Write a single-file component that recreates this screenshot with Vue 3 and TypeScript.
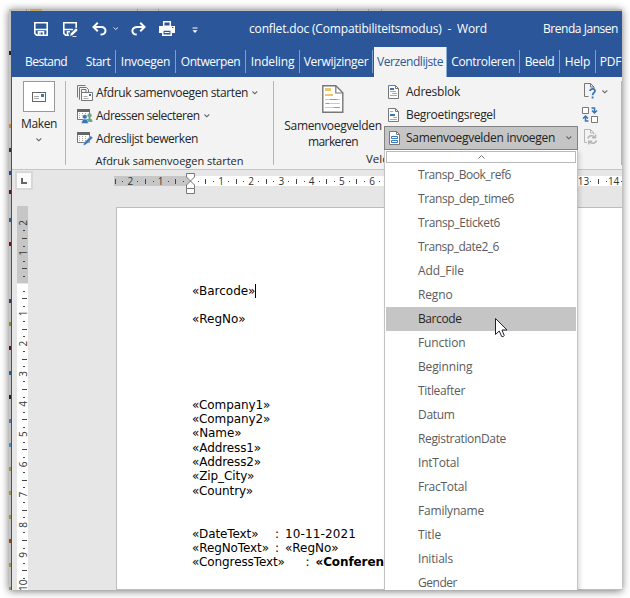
<script setup lang="ts">
interface Label { text: string; width: number }
interface Tab extends Label { cell: number; active?: boolean; plain?: boolean }

/* Spreads a label over the given width by adjusting its letter spacing. */
const vFit = {
  mounted(el: HTMLElement, binding: { value: number }) {
    const natural = el.getBoundingClientRect().width
    const count = (el.textContent ?? '').length
    el.style.letterSpacing = `${(binding.value - natural) / count}px`
  },
}

const tabs: Tab[] = [
  { text: 'Bestand', width: 42, cell: 69, plain: true },
  { text: 'Start', width: 24.5, cell: 35 },
  { text: 'Invoegen', width: 49.5, cell: 60 },
  { text: 'Ontwerpen', width: 59.5, cell: 70 },
  { text: 'Indeling', width: 43.5, cell: 54 },
  { text: 'Verwijzinger', width: 64.5, cell: 73 },
  { text: 'Verzendlijste', width: 66, cell: 74, active: true },
  { text: 'Controleren', width: 63.5, cell: 73 },
  { text: 'Beeld', width: 29.5, cell: 40 },
  { text: 'Help', width: 25.5, cell: 36 },
  { text: 'PDF', width: 21.5, cell: 30 },
]

const fields: Label[] = [
  { text: 'Transp_Book_ref6', width: 93 },
  { text: 'Transp_dep_time6', width: 96 },
  { text: 'Transp_Eticket6', width: 82 },
  { text: 'Transp_date2_6', width: 81 },
  { text: 'Add_File', width: 46 },
  { text: 'Regno', width: 34.5 },
  { text: 'Barcode', width: 43.5 },
  { text: 'Function', width: 47.5 },
  { text: 'Beginning', width: 54.5 },
  { text: 'Titleafter', width: 47 },
  { text: 'Datum', width: 36.5 },
  { text: 'RegistrationDate', width: 88 },
  { text: 'IntTotal', width: 41 },
  { text: 'FracTotal', width: 49 },
  { text: 'Familyname', width: 66 },
  { text: 'Title', width: 23 },
  { text: 'Initials', width: 35 },
  { text: 'Gender', width: 39 },
]
const selected = 'Barcode'

const step = 30.2
const hNumbers = [-2, -1, 1, 2, 3, 4, 5, 6, 13, 14]
const vNumbers = [-2, -1, 1, 2, 3, 4, 5, 6, 7, 8, 9, 10]
const quarters = Array.from({ length: 70 }, (_, i) => i - 10).filter((q) => q % 4 !== 0)
const hQuarters = quarters
const vQuarters = quarters.filter((q) => q < 40 && q > -8)

const address = ['Company1', 'Company2', 'Name', 'Address1', 'Address2', 'Zip_City', 'Country']

const debris = [
  { y: 51, c: '#222' }, { y: 124, c: '#c78a3c' }, { y: 148, c: '#333' }, { y: 171, c: '#274a78' },
  { y: 190, c: '#5a1030' }, { y: 218, c: '#345f92' }, { y: 242, c: '#6b1717' }, { y: 299, c: '#333a5c' },
  { y: 322, c: '#8a8a35' }, { y: 346, c: '#5a1030' }, { y: 371, c: '#285f92' }, { y: 395, c: '#222' },
  { y: 419, c: '#5577a0' }, { y: 443, c: '#4e8db4' }, { y: 467, c: '#a3934a' }, { y: 491, c: '#a3934a' },
  { y: 515, c: '#a3934a' }, { y: 539, c: '#8a4a20' }, { y: 563, c: '#a3934a' }, { y: 587, c: '#a3934a' },
]
</script>

<template>
  <div class="screen">
    <div class="shot">
      <svg class="behind" width="613" height="581" shape-rendering="crispEdges">
        <rect width="613" height="2" fill="#bdbdbd" />
        <rect width="2" height="581" fill="#c3c3c3" />
        <rect x="21" width="12" height="2" fill="#c5a75c" />
        <path d="M17 0v2M128 0v2M149 0v2M328 0v2M359 0v2M372 0v2" stroke="#999" />
        <rect v-for="d in debris" :key="d.y" x="0" :y="d.y - 9" width="2" height="4" :fill="d.c" />
      </svg>
      <div class="window">
        <header class="titlebar">
          <div class="quick">
            <svg width="14" height="14" viewBox="0 0 14 14" fill="none" stroke="#fff" stroke-width="1.6"><path d="M.8.8h12.4v12.4H2.6L.8 11.5zM1 7.5h12M4.5 13V9.8h5V13" /><path d="M6 10v3" stroke-width="1" /></svg>
            <svg class="save-as" width="16" height="16" viewBox="0 0 16 16" fill="none" stroke="#fff" stroke-width="1.6"><path d="M6 13.2H2.6L.8 11.5V.8h12.4V6M1 7.5h9M4.500 13V9.800H7" /><path d="m6.500 14.500 1-3.200 5.500-5.500 2.200 2.200-5.500 5.500z" fill="#fff" stroke="#2b579a" stroke-width=".8" /><path d="m11.200 7.600 2 2M9.500 14.500h4" stroke="#cfdced" stroke-width="1" /></svg>
            <svg class="undo" width="15" height="14" viewBox="0 0 15 14" fill="none" stroke="#fff" stroke-width="2"><path d="M5.800.8 1.500 5l4.300 4.200M2 5h7.200c6 0 5.700 7.600-.7 7.600" /></svg>
            <svg class="undo-menu" width="6" height="4" fill="none" stroke="#e3eaf5"><path d="m.5.5 2.200 2L5 .5" /></svg>
            <svg class="redo" width="15" height="14" viewBox="0 0 15 14" fill="none" stroke="#fff" stroke-width="2"><path d="M9.200.8 13.500 5 9.200 9.200M13 5H6.800C-.4 5-.1 12.600 5.700 12.600" /></svg>
            <svg class="print" width="16" height="15" viewBox="0 0 16 15"><path d="M0 5h16v7h-3V9H3v3H0z" fill="#fff" /><path d="M4.700.7h6.600v4.600H4.700zM3.800 9h8.400v5.200H3.800z" fill="#2b579a" stroke="#fff" stroke-width="1.500" /><path d="M5.500 11.500h5" stroke="#fff" /><path d="M13 6.500h1.400" stroke="#2b579a" /></svg>
            <svg class="more" width="6" height="7" fill="none"><path d="M.5 1h5" stroke="#fff" /><path d="M.5 3.300h5L3 6z" fill="#fff" /></svg>
          </div>
          <div class="doc-title"><span v-fit="238">conflet.doc (Compatibiliteitsmodus)&nbsp; -&nbsp; Word</span></div>
          <div class="user"><span v-fit="75">Brenda Jansen</span></div>
        </header>

        <nav class="tabs">
          <div v-for="t in tabs" :key="t.text" class="tab" :class="{ active: t.active, plain: t.plain }" :style="{ width: t.cell + 'px' }">
            <span v-fit="t.width">{{ t.text }}</span>
          </div>
        </nav>

        <section class="ribbon">
          <div class="group make">
            <div class="make-box">
              <svg width="14" height="10" fill="none" shape-rendering="crispEdges"><path d="M.5.5h13v9H.5z" stroke="#666" /><path d="M2 4.500h5M2 6.500h5" stroke="#aaa" /><path d="M9 2h3v3H9z" fill="#3976b5" /></svg>
            </div>
            <span v-fit="36" class="make-label">Maken</span>
            <svg class="chev" width="6" height="4"><path d="m.5.5 2.300 2.300L5.200.5" /></svg>
          </div>

          <div class="group start">
            <div class="command">
              <svg width="16" height="16" fill="none" stroke="#767676"><path d="M.5 12.500V.5h8M3 14.500h-.5v-12h7l2 2V7" /><path d="M4.500 8V4.500H9V7" /><path d="M4.500 7.500h11v8h-11z" fill="#fff" /><path d="M6.500 11.500h4M6.500 13.500h5" stroke="#aaa" /><path d="M12 9h2v2h-2z" fill="#3976b5" stroke="none" /></svg>
              <span v-fit="152">Afdruk samenvoegen starten</span>
              <svg class="chev" width="6" height="4"><path d="m.5.5 2.300 2.300L5.200.5" /></svg>
            </div>
            <div class="command">
              <svg width="16" height="16" fill="none"><path d="M.5 1.500h12v10H.5z" fill="#fff" stroke="#777" /><path d="M0 1h13v3H0z" fill="#666" /><path d="M2 5.500h9M2 7.500h9M2 9.500h9" stroke="#aaa" stroke-dasharray="1 2" /><circle cx="12.500" cy="7.500" r="2.200" fill="#6da58d" /><path d="M9.500 14c0-5 6-5 6 0z" fill="#6da58d" /><circle cx="7.800" cy="8.800" r="2.400" fill="#3976b5" stroke="#f3f3f3" stroke-width=".6" /><path d="M4.500 15.500c0-6 6.800-6 6.800 0z" fill="#3976b5" stroke="#f3f3f3" stroke-width=".5" /></svg>
              <span v-fit="103.5">Adressen selecteren</span>
              <svg class="chev" width="6" height="4"><path d="m.5.5 2.300 2.300L5.200.5" /></svg>
            </div>
            <div class="command">
              <svg width="16" height="16" fill="none"><path d="M.5 1.500h12v10H.5z" fill="#fff" stroke="#777" /><path d="M0 1h13v3H0z" fill="#666" /><path d="M2 5.500h9M2 7.500h9M2 9.500h9" stroke="#aaa" stroke-dasharray="1 2" /><path d="m6 14.800 1.100-3.300 6.800-6.800 2 2-6.800 6.900z" fill="#3976b5" stroke="#f3f3f3" stroke-width=".5" /></svg>
              <span v-fit="102">Adreslijst bewerken</span>
            </div>
            <div class="caption"><span v-fit="148">Afdruk samenvoegen starten</span></div>
          </div>

          <div class="group write">
            <div class="mark">
              <svg width="22" height="29" fill="none"><path d="M.8.8h13l7 7v19.400H.8z" fill="#fff" stroke="#777" stroke-width="1.400" /><path d="M13.800 1v7h7" stroke="#777" stroke-width="1.200" /><path d="M3 3h6v3H3zM3 9h8v2H3z" fill="#edc471" /><path d="M3 14.500h15M3 18.500h15M3 22.500h15" stroke="#e9c67f" /><path d="M8 14.500h7M4 18.500h3M12 22.500h6" stroke="#999" /></svg>
              <span v-fit="97.5" class="line-a">Samenvoegvelden</span>
              <span v-fit="50">markeren</span>
            </div>
            <div class="insert">
              <div class="command">
                <svg width="12" height="14" fill="none"><path d="M.5.5h7l3 3v10H.5z" fill="#fff" stroke="#777" /><path d="M7.500.5v3h3" stroke="#777" /><path d="M2 3h4v2H2z" fill="#3976b5" /><path d="M2 6.500h6M4 8.500h5M2 10.500h7" stroke="#aaa" /></svg>
                <span v-fit="54">Adresblok</span>
              </div>
              <div class="command">
                <svg width="12" height="14" fill="none"><path d="M.5.5h7l3 3v10H.5z" fill="#fff" stroke="#777" /><path d="M7.500.5v3h3" stroke="#777" /><path d="M2 6h5v2H2z" fill="#3976b5" /><path d="M2 3.500h3M5 9.500h4M2 11.500h7" stroke="#aaa" /></svg>
                <span v-fit="89.5">Begroetingsregel</span>
              </div>
              <div class="command pressed">
                <svg width="12" height="14" fill="none"><path d="M.5.5h7l3 3v10H.5z" fill="#fff" stroke="#777" /><path d="M7.500.5v3h3" stroke="#777" /><path d="M2.500 5.500h6v2h-6zM2.500 9.500h6v2h-6z" stroke="#3976b5" /></svg>
                <span v-fit="149">Samenvoegvelden invoegen</span>
                <svg class="chev" width="6" height="4"><path d="m.5.5 2.300 2.300L5.200.5" /></svg>
              </div>
            </div>
            <div class="tools">
              <div class="tool">
                <svg width="16" height="17" fill="none"><path d="M6.500 13.500h-4V.5h6l3.500 3.500v2" stroke="#777" /><path d="M8.500.5V4H12" stroke="#777" /><path d="M8 8c.2-3 5.500-2.500 5 .2-.3 1.800-2.400 1.500-2.400 4M10.600 13.500v2" stroke="#3976b5" stroke-width="1.800" /></svg>
                <svg class="chev" width="6" height="4"><path d="m.5.5 2.300 2.300L5.200.5" /></svg>
              </div>
              <div class="tool">
                <svg width="16" height="17" fill="none"><path d="M.5 1.500h6v6h-6zM9.500 10.500h6v6h-6z" fill="#fff" stroke="#777" /><path d="M9.500 2h3v4M10 4.500l2.500 2.500L15 4.500M6.500 15h-3v-4M1 12.500 3.500 10 6 12.500" stroke="#3976b5" stroke-width="1.500" /></svg>
              </div>
              <div class="tool">
                <svg width="16" height="17" fill="none" stroke="#b5b5b5"><path d="M5 13.500H2.500V.5h6L12 4v1M8.500.5V4H12" /><path d="M5.800 9.500c1-3.500 5.500-3.700 7-1M13.500 5.500v3.300H10M14.500 11.500c-1 3.500-5.500 3.700-7 1M6.800 15.500v-3.300h3.500" stroke-width="1.500" /></svg>
              </div>
            </div>
            <div class="caption write-caption">Velden</div>
          </div>
        </section>

        <main class="workspace">
          <div class="ruler-row">
            <div class="tab-stop"><svg width="6" height="6"><path d="M1 0v5h5" fill="none" stroke="#666" stroke-width="2" /></svg></div>
            <svg class="h-ruler" width="508" height="20">
              <rect y="2" width="76" height="10" fill="#c6c6c6" />
              <rect x="76" y="2" width="432" height="10" fill="#fff" />
              <g shape-rendering="crispEdges" fill="#444">
                <rect v-for="q in hQuarters" :key="q" :x="Math.round(76.3 + q * step / 4)" :y="q % 2 ? 7 : 5" width="1" :height="q % 2 ? 1 : 5" />
              </g>
              <text v-for="n in hNumbers" :key="n" :x="76.8 + n * step" y="11" text-anchor="middle">{{ Math.abs(n) }}</text>
              <g fill="#fff" stroke="#777"><path d="M72.500-.5h8v3.500l-4 4-4-4zM76.500 7l4 4v3.500h-8V11z" /><path d="M72.500 14.500h8v5h-8z" /></g>
            </svg>
          </div>
          <div class="canvas">
            <svg class="v-ruler" width="11" height="384">
              <rect width="11" height="77" fill="#c6c6c6" />
              <rect y="78" width="11" height="306" fill="#fff" />
              <g shape-rendering="crispEdges" fill="#444">
                <rect v-for="q in vQuarters" :key="q" :x="q % 2 ? 6 : 5" :y="Math.round(77.3 + q * step / 4)" :width="q % 2 ? 2 : 5" height="1" />
              </g>
              <text v-for="n in vNumbers" :key="n" :transform="`translate(10 ${77.2 + n * step}) rotate(-90)`" text-anchor="middle">{{ Math.abs(n) }}</text>
            </svg>
            <article class="page">
              <p><span v-fit="62.5">«Barcode»</span><i class="caret"></i></p>
              <p>&nbsp;</p>
              <p><span v-fit="53">«RegNo»</span></p>
              <p v-for="n in 5" :key="n">&nbsp;</p>
              <p v-for="a in address" :key="a">«{{ a }}»</p>
              <p>&nbsp;</p>
              <p>&nbsp;</p>
              <p><span class="key">«DateText»</span><span class="colon">:</span><span v-fit="70">10-11-2021</span></p>
              <p><span class="key">«RegNoText»</span><span class="colon">:</span><span v-fit="53">«RegNo»</span></p>
              <p><span class="key wide">«CongressText»</span><span class="colon">:</span><b>«Conference»</b></p>
            </article>
          </div>
        </main>

        <div class="menu">
          <div class="scroll-up"><svg width="7" height="4"><path d="m.5 3.500 3-3 3 3" fill="none" stroke="#777" /></svg></div>
          <div v-for="f in fields" :key="f.text" class="item" :class="{ selected: f.text === selected }">
            <span v-fit="f.width">{{ f.text }}</span>
          </div>
        </div>

        <svg class="pointer" width="13" height="20"><path d="M.5.500v16l3.700-3.500 2.500 5.500q1.800.8 2.500-1L7 12h5z" fill="#fff" stroke="#222232" /></svg>
      </div>
    </div>
  </div>
</template>

<style>
body { background: #fff; overflow: hidden; }
</style>

<style scoped>
.screen { width: 630px; height: 598px; box-sizing: border-box; padding: 9px 8px 8px 9px; background: #fff; overflow: hidden; font: 12px/16px "Open Sans", "Noto Sans", sans-serif; color: #262626; }
.shot { position: relative; width: 613px; height: 581px; box-sizing: border-box; padding: 2px 0 0 2px; box-shadow: 0 1px 8px rgba(0, 0, 0, .55); }
.behind { position: absolute; left: 0; top: 0; }
svg { display: block; flex: none; }
span { white-space: nowrap; display: inline-block; }
.window { position: relative; width: 611px; height: 579px; box-sizing: border-box; border-left: 1px solid #2b579a; overflow: hidden; background: #e6e6e6; }
.titlebar { display: flex; height: 36px; background: #2b579a; color: #fff; }
.quick { display: flex; align-items: center; width: 237px; box-sizing: border-box; padding-left: 22px; }
.save-as { margin: 2px 0 0 15px; }
.undo { margin-left: 13px; }
.undo-menu { margin-left: 6px; }
.redo { margin-left: 12px; }
.print { margin-left: 13px; margin-top: -1px; }
.more { margin-left: 17px; margin-top: 2px; }
.doc-title { width: 294px; line-height: 36px; }
.user { line-height: 35px; }
.tabs { display: flex; height: 30px; background: #2b579a; color: #fff; }
.tab { flex: none; display: flex; justify-content: center; box-sizing: border-box; line-height: 29px; padding-right: 1px; }
.tab + .tab { background: linear-gradient(#7ba0ce, #7ba0ce) right 3px / 1px 23px no-repeat; }
.tab.active { background: #f3f3f3; color: #2b579a; border-right: 1px solid #8db0d8; border-left: 1px solid #2b579a; padding: 0; }
.ribbon { display: flex; height: 93px; box-sizing: border-box; background: #f3f3f3; border-bottom: 1px solid #c6c6c6; overflow: hidden; }
.group { flex: none; background: linear-gradient(#b5b5b5, #b5b5b5) right 4px / 1px 84px no-repeat; }
.make { width: 54px; display: flex; flex-direction: column; align-items: center; padding-top: 4px; box-sizing: border-box; }
.make-box { display: grid; place-items: center; width: 32px; height: 31px; box-sizing: border-box; border: 1px solid #999; background: #fff; }
.make-label { margin: 4px 0 4px; }
.chev { fill: none; stroke: #666; stroke-width: 1.1; }
.make .chev { margin-top: 2px; }
.start { width: 208px; box-sizing: border-box; padding: 4px 0 0 11px; }
.command { display: flex; align-items: center; height: 23px; }
.start .command > svg:first-child { margin-right: 3px; }
.command .chev { margin-left: 4px; }
.caption { display: flex; justify-content: center; font-size: 11px; line-height: 16px; }
.start .caption { margin: 3px 14px 0 2px; }
.write { width: 348px; height: 92px; display: grid; grid-template-columns: 110px 194px 1fr; grid-template-rows: 73px 19px; }
.mark { display: flex; flex-direction: column; align-items: center; padding: 8px 0 0 8px; }
.mark .line-a { margin-top: 4px; }
.insert { padding-top: 3px; }
.insert .command { padding-left: 5px; }
.insert .command svg:first-child { margin-right: 5px; }
.insert .command:not(.pressed) svg:first-child { margin-left: -1px; margin-right: 6px; }
.insert .pressed { box-sizing: border-box; width: 194px; height: 24px; padding-left: 4px; background: #c5c5c5; border: 1px solid #838383; color: #222; }
.pressed .chev { margin-left: 11px; }
.tools { padding: 3px 0 0 4px; }
.tool { display: flex; align-items: center; height: 23px; }
.tool .chev { margin-left: 4px; }
.write-caption { justify-content: flex-start; padding-left: 92px; font-size: 11.5px; line-height: 17px; }
.ruler-row { display: flex; height: 36px; }
.tab-stop { width: 19px; height: 19px; box-sizing: border-box; margin: 1px 81px 0 3px; display: grid; place-items: center; background: #fafafa; border: 2px solid #d8d8d8; }
.h-ruler { margin-top: 4px; overflow: visible; }
.h-ruler text, .v-ruler text { font: 10px "Open Sans", sans-serif; fill: #333; }
.canvas { display: flex; height: 384px; padding-left: 5px; }
.v-ruler { overflow: visible; }
.page { flex: none; width: 506px; box-sizing: border-box; margin: 1px 0 0 88px; padding: 75.5px 0 0 75px; background: #fff; border: 1px solid #bdbdbd; border-right: 0; font: 12px/14.3px "DejaVu Sans", sans-serif; letter-spacing: -.1px; color: #000; }
.page p { display: flex; margin: 0; height: 14.3px; white-space: pre; }
.caret { width: 1px; height: 14px; background: #000; }
.key { width: 83px; }
.key.wide { width: 113.5px; }
.colon { width: 10px; }
.menu { position: absolute; left: 372px; top: 139px; width: 194px; height: 445px; box-sizing: border-box; padding: 1px 1px 0; background: #fff; border: solid #c3c3c3; border-width: 0 1px; box-shadow: 2px 2px 4px rgba(0, 0, 0, .14); color: #5b5b5b; }
.scroll-up { height: 12px; box-sizing: border-box; display: grid; place-items: center; border: 1px solid #b9b9b9; background: #fff; }
.item { height: 24px; padding-left: 32px; line-height: 24px; }
.item.selected { background: #c5c5c5; color: #262626; }
.pointer { position: absolute; left: 483px; top: 307px; }
</style>
